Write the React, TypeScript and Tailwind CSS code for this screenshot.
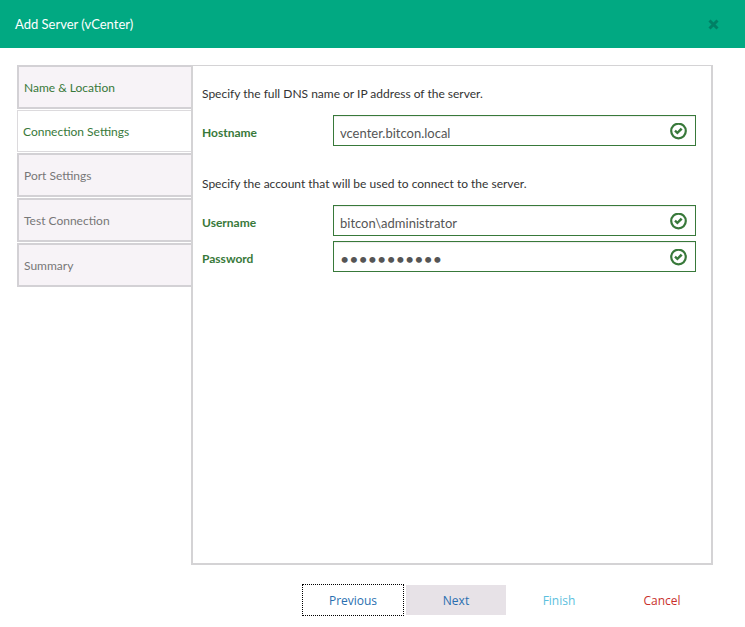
import { useState } from 'react'
import { clsx } from 'clsx'

const steps = [
  { name: 'Name & Location', done: true },
  { name: 'Connection Settings', done: true },
  { name: 'Port Settings', done: false },
  { name: 'Test Connection', done: false },
  { name: 'Summary', done: false },
]

function ValidIcon() {
  return (
    <svg viewBox="0 0 17 17" className="pointer-events-none absolute top-2 right-[9px] h-[17px] w-[17px]" aria-hidden="true">
      <circle cx="8.5" cy="8" r="7.3" fill="none" stroke="#38793a" strokeWidth="2.2" />
      <path d="M4.2 8.4 5.8 6.8 7.4 8.2 10.7 4.7 12.6 6.4 7.4 11.6Z" fill="#38793a" />
    </svg>
  )
}

type FieldProps = {
  id: string
  label: string
  value: string
  type?: string
  onChange: (value: string) => void
}

function Field({ id, label, value, type = 'text', onChange }: FieldProps) {
  return (
    <div className="flex items-center">
      <label htmlFor={id} className="w-[131px] shrink-0 pt-1 font-bold text-[#38793a]">
        {label}
      </label>
      <div className="relative flex-1">
        <input
          id={id}
          type={type}
          value={value}
          onChange={(e) => onChange(e.target.value)}
          className={clsx(
            'block h-[31px] w-full border border-[#38793a] bg-white pt-1 pr-8 pl-1.5 text-[#555] shadow-[inset_0_1px_1px_rgba(0,0,0,0.075)] outline-none',
            type === 'password' ? 'text-[16px]' : 'text-[13px]'
          )}
        />
        <ValidIcon />
      </div>
    </div>
  )
}

export default function App() {
  const [active, setActive] = useState('Connection Settings')
  const [hostname, setHostname] = useState('vcenter.bitcon.local')
  const [username, setUsername] = useState('bitcon\\administrator')
  const [password, setPassword] = useState('password123')

  return (
    <div className="bg-white font-[Lato,sans-serif] text-[12px] leading-5 text-[#333]">
      <header className="flex h-12 items-center justify-between bg-[#01a982] pr-[26px] pl-[15px] text-white">
        <h1 className="text-[13px]">Add Server (vCenter)</h1>
        <button type="button" aria-label="Close" className="text-[#018065]">
          <svg viewBox="0 0 11 11" className="h-[11px] w-[11px]">
            <path d="M1.5 1.5 9.5 9.5M9.5 1.5 1.5 9.5" stroke="currentColor" strokeWidth="3" />
          </svg>
        </button>
      </header>

      <main className="flex pt-[17px] pr-8 pl-[17px]">
        {/* Wizard steps */}
        <nav className="flex w-[174px] shrink-0 flex-col gap-px">
          {steps.map((step) => (
            <button
              key={step.name}
              type="button"
              onClick={() => setActive(step.name)}
              className={clsx(
                'border-r-0 pt-0.5 pl-[5px] text-left',
                step.name === active
                  ? 'h-[42px] border border-[#dcdadd] bg-white'
                  : 'h-11 border-2 border-[#d3d1d5] bg-[#f7f3f7]',
                step.done ? 'text-[#38793a]' : 'text-[#777]'
              )}
            >
              {step.name}
            </button>
          ))}
        </nav>

        <section className="min-h-[500px] flex-1 border-2 border-t border-[#d4d3d5] pt-[18px] pr-[15px] pl-[9px]">
          <p>Specify the full DNS name or IP address of the server.</p>
          <div className="mt-[11px]">
            <Field id="hostname" label="Hostname" value={hostname} onChange={setHostname} />
          </div>
          <p className="mt-7">Specify the account that will be used to connect to the server.</p>
          <div className="mt-[11px] flex flex-col gap-[5px]">
            <Field id="username" label="Username" value={username} onChange={setUsername} />
            <Field id="password" label="Password" type="password" value={password} onChange={setPassword} />
          </div>
        </section>
      </main>

      <footer className="flex justify-end gap-[3px] pt-5 pr-[33px] pb-3 font-['Open_Sans',sans-serif] font-medium">
        <button type="button" className="h-[30px] w-[100px] pt-0.5 text-[#2a6fb0] outline-1 outline-black outline-dotted">
          Previous
        </button>
        <button type="button" className="h-[30px] w-[100px] bg-[#e7e2e7] pt-0.5 text-[#2a6fb0]">
          Next
        </button>
        <button type="button" className="h-[30px] w-[100px] pt-0.5 text-[#5bc0de]">
          Finish
        </button>
        <button type="button" className="h-[30px] w-[100px] pt-0.5 text-[#c9302c]">
          Cancel
        </button>
      </footer>
    </div>
  )
}
